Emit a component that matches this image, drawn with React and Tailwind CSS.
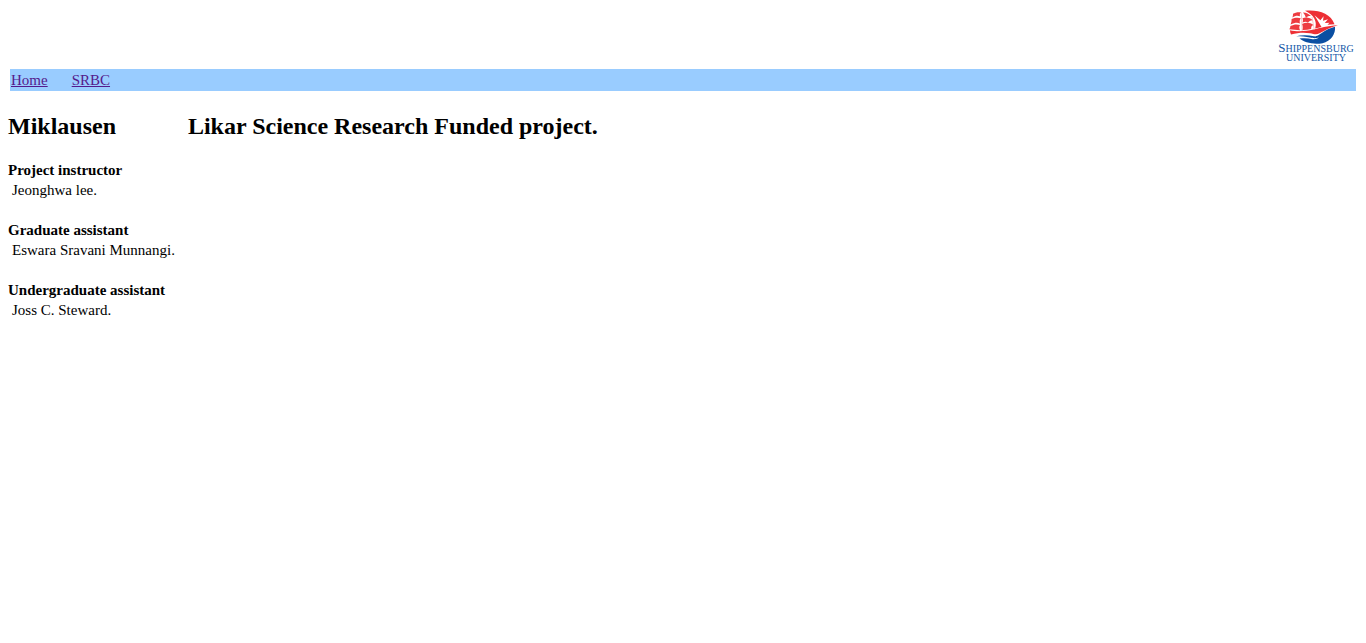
const people = [
  { role: "Project instructor", name: "Jeonghwa lee." },
  { role: "Graduate assistant", name: "Eswara Sravani Munnangi." },
  { role: "Undergraduate assistant", name: "Joss C. Steward." },
];

function Logo() {
  return (
    <div className="flex w-20 flex-col items-center pt-px text-[#1458a8]">
      <svg viewBox="0 0 54 36" className="-mb-0.5 mr-2 h-9 w-[54px]" aria-hidden="true">
        {/* globe base and water */}
        <path
          d="M10 27.4C17 25.8 23 26 29 27.3C31.5 27.8 33.5 26.4 36 24.6C41 20.8 46 18.8 50 17.8C50.8 25 46 32.2 37.5 34.2C29 36 19 33.6 14.5 29.6C19 28.8 23 29.2 27.5 30.2C30 30.8 32 29.7 34 28.6C30 29.4 28.5 29.2 25 28.6C20 27.6 14.5 27.2 10 27.4Z"
          fill="#0b4fa2"
        />
        {/* hull, with its bow running right */}
        <path
          d="M5 21.2C11 22.8 20 22.6 28.5 20.6C35 19 42 16.8 53 16.2C45 18.6 39.5 21.4 34.5 24.2C31.5 25.9 29 25 25 24.2C19 23.2 12.5 23.6 6 25.6C5.4 24.2 5 22.8 5 21.2Z"
          fill="#ed2f35"
        />
        {/* sky */}
        <path
          d="M20 1.8C32 .2 46 4.2 49.5 15.2L42.5 15.8L44.5 13.8L39.8 14.1L43 10.2L38 11.8L38.6 7.2L35.4 11.2L29.5 6.2L34.2 14L36.5 18L30.2 19.5C32.4 12.5 29 6 20 1.8Z"
          fill="#ed2f35"
        />
        <g fill="#ed3b40">
          <path d="M8 4.8C10 3.4 13.2 2.8 16 3.3C14.8 4.5 14.6 5.8 15 7.2C12.6 6.2 10 6.6 7.4 8.4C7.9 7.1 8.1 5.9 8 4.8Z" />
          <path d="M6.6 10.1C9.5 8.6 13 8.3 15.8 9.2C14.6 10.8 14.4 12.6 15 14.4C12.2 13.3 9.2 13.8 5.6 15.6C6.4 13.8 6.7 12 6.6 10.1Z" />
          <path d="M5.4 17C8.8 15.2 12 15 15 16C14 17.7 14.1 19.4 15 21.2C11.4 20.8 8 20.5 4.2 20.3C5.1 19.3 5.3 18.2 5.4 17Z" />
          <path d="M18 3.4C21 3.3 24 4.8 26 7.1C23.8 6.9 22.2 7.4 21 8.9C20.4 6.9 19.4 5 18 3.4Z" />
          <path d="M17.5 9.2C21 7.8 25.3 8.5 28.2 11.4C26 11 24.3 11.8 23 13.8C21.7 12.5 19.8 12.4 17.5 13.6C18.1 12 18.1 10.6 17.5 9.2Z" />
          <path d="M17 15C20.8 13 25.2 13.2 28.5 16C26.8 16.4 26 17.6 26.2 20C23.2 20.9 20.2 21.2 17.4 21.1C18 19 17.9 17 17 15Z" />
        </g>
        <path d="M16.3 3.5L17.2 22M27 8L29.3 21" stroke="#f6a2a4" strokeWidth=".6" fill="none" />
      </svg>
      <p className="text-[10px] leading-[9px] whitespace-nowrap">
        <span className="text-[13px] leading-[9px]">S</span>HIPPENSBURG
      </p>
      <p className="text-[10px] leading-[9px] whitespace-nowrap">UNIVERSITY</p>
    </div>
  );
}

export default function App() {
  return (
    <div className="min-h-screen bg-white px-2 pt-2 font-['Liberation_Serif',serif] text-[15px] leading-5 text-black">
      <header className="px-0.5">
        <div className="flex h-[61px] justify-end">
          <Logo />
        </div>
        <nav className="flex gap-6 bg-[#99ccff] px-px py-px text-[#551a8b]">
          <a href="#home" className="underline">Home</a>
          <a href="#srbc" className="underline">SRBC</a>
        </nav>
      </header>
      <main className="flex gap-[13px] pt-5">
        <section>
          <h2 className="text-2xl leading-[30px] font-bold">Miklausen</h2>
          <dl className="flex flex-col gap-5 pt-[19px]">
            {people.map((p) => (
              <div key={p.role}>
                <dt className="font-bold">{p.role}</dt>
                <dd className="pl-1">{p.name}</dd>
              </div>
            ))}
          </dl>
        </section>
        <section>
          <h2 className="text-2xl leading-[30px] font-bold">Likar Science Research Funded project.</h2>
        </section>
      </main>
    </div>
  );
}
